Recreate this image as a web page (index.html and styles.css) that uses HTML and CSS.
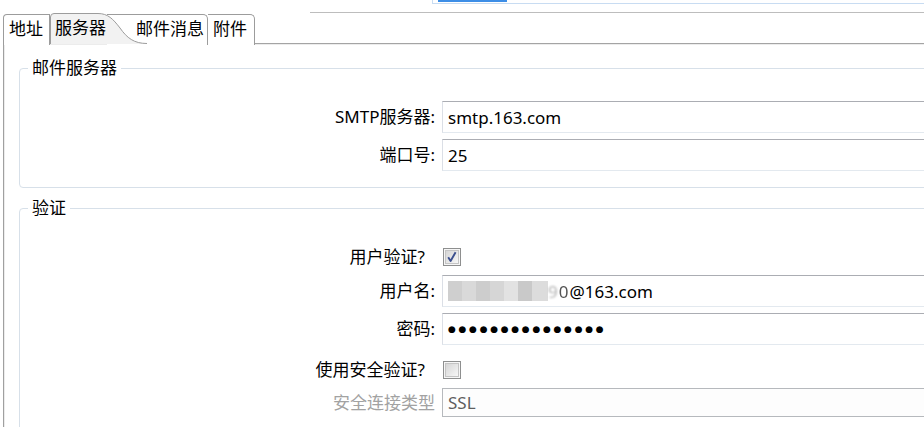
FILE: index.html
```html
<!DOCTYPE html>
<html lang="zh-CN">
<head>
<meta charset="utf-8">
<title>邮件设置</title>
<link rel="stylesheet" href="styles.css">
</head>
<body>
<div class="top">
  <div class="top-left"></div>
  <div class="top-right">
    <div class="top-box"><div class="top-bar"></div></div>
  </div>
</div>
<div class="tabs">
  <div class="tab tab-addr">地址</div>
  <div class="tab-sel">
    <svg class="tab-shape" width="97" height="31" viewBox="0 0 97 31">
      <path d="M0.5 31 V4 Q0.5 0.5 4 0.5 H48 C58 0.5 63 6 70 15 C77 25 84 30.5 97 30.5 V31 Z" fill="#f2f2f2"/>
      <path d="M0.5 31 V4 Q0.5 0.5 4 0.5 H48 C58 0.5 63 6 70 15 C77 25 84 30.5 97 30.5" fill="none" stroke="#9c9c9c"/>
    </svg>
    <span class="tab-label">服务器</span>
  </div>
  <div class="tab tab-msg">邮件消息</div>
  <div class="tab tab-att">附件</div>
</div>
<div class="panel">
  <fieldset class="group">
    <legend>邮件服务器</legend>
    <div class="rows rows-server">
      <div class="row row-field">
        <div class="lbl">SMTP服务器:</div>
        <div class="field">smtp.163.com</div>
      </div>
      <div class="row row-field gap6">
        <div class="lbl">端口号:</div>
        <div class="field">25</div>
      </div>
    </div>
  </fieldset>
  <fieldset class="group group-auth">
    <legend>验证</legend>
    <div class="rows rows-auth">
      <div class="row row-check">
        <div class="lbl lbl-check">用户验证?</div>
        <svg class="cb" width="18" height="18" viewBox="0 0 18 18">
          <defs><linearGradient id="g1" x1="0" y1="0" x2="1" y2="1"><stop offset="0" stop-color="#d4d4d4"/><stop offset="1" stop-color="#f8f8f8"/></linearGradient></defs>
          <rect x="0.5" y="0.5" width="17" height="17" fill="#f6f6f6" stroke="#8e8f8f"/>
          <rect x="2.5" y="2.5" width="13" height="13" fill="url(#g1)" stroke="#c4c4c4"/>
          <path d="M5.2 9.2 L7.6 13 L12.6 4.2" fill="none" stroke="#3b4f8e" stroke-width="1.9" stroke-linejoin="round"/>
        </svg>
      </div>
      <div class="row row-field gap9">
        <div class="lbl">用户名:</div>
        <div class="field user">
          <span class="blur"><i class="b1"></i><i class="b2"></i><i class="b3"></i><i class="b4"></i><i class="b5"></i><i class="b6"></i><i class="b7"></i></span><span class="faint">9</span><span class="half">0</span>@163.com
        </div>
      </div>
      <div class="row row-field gap6">
        <div class="lbl">密码:</div>
        <div class="field pw"><span class="dots">●●●●●●●●●●●●●●●</span></div>
      </div>
      <div class="row row-check gap16">
        <div class="lbl lbl-check">使用安全验证?</div>
        <svg class="cb" width="18" height="18" viewBox="0 0 18 18">
          <defs><linearGradient id="g2" x1="0" y1="0" x2="1" y2="1"><stop offset="0" stop-color="#d4d4d4"/><stop offset="1" stop-color="#f8f8f8"/></linearGradient></defs>
          <rect x="0.5" y="0.5" width="17" height="17" fill="#f6f6f6" stroke="#8e8f8f"/>
          <rect x="2.5" y="2.5" width="13" height="13" fill="url(#g2)" stroke="#c4c4c4"/>
        </svg>
      </div>
      <div class="row row-disabled gap9">
        <div class="lbl lbl-disabled">安全连接类型</div>
        <div class="field field-disabled">SSL</div>
      </div>
    </div>
  </fieldset>
</div>
</body>
</html>
```
FILE: styles.css
```css
html, body {
  margin: 0;
  padding: 0;
}
body {
  width: 924px;
  height: 427px;
  overflow: hidden;
  background: #ffffff;
  font-family: "Noto Sans", "Noto Sans CJK SC", sans-serif;
  font-size: 17px;
  color: #000000;
}

/* top strip */
.top {
  display: flex;
  height: 13px;
}
.top-left {
  width: 310px;
}
.top-right {
  flex: 1;
  height: 12px;
  border-bottom: 1px solid #bdbdbd;
}
.top-box {
  margin-left: 122px;
  height: 4px;
  border: 1px solid #c8dcf2;
  border-top: none;
  border-right: none;
  box-sizing: border-box;
  padding-left: 5px;
}
.top-bar {
  width: 69px;
  height: 2px;
  background: #3d8ee6;
}

/* tabs */
.tabs {
  display: flex;
  align-items: flex-start;
  height: 31px;
  margin-left: 3px;
  margin-bottom: -1px;
}
.tab {
  box-sizing: border-box;
  height: 31px;
  margin-top: 1px;
  border: 1px solid #9c9c9c;
  border-bottom: none;
  background: #ffffff;
  line-height: 27px;
  white-space: nowrap;
}
.tab-addr {
  width: 47px;
  padding-left: 5px;
  border-radius: 4px 0 0 0;
}
.tab-sel {
  position: relative;
  z-index: 2;
  width: 97px;
  height: 31px;
  flex: none;
}
.tab-shape {
  position: absolute;
  left: 0;
  top: 0;
}
.tab-label {
  position: relative;
  display: block;
  padding-left: 5px;
  line-height: 29px;
}
.tab-msg {
  width: 101px;
  margin-left: -40px;
  padding-left: 29px;
  border-left: none;
  border-radius: 0 5px 0 0;
}
.tab-att {
  width: 47px;
  padding-left: 5px;
  border-left: none;
  border-radius: 0 5px 0 0;
}

/* panel */
.panel {
  margin-left: 3px;
  height: 400px;
  border-left: 1px solid #a0a0a0;
  border-top: 1px solid #a4a4a4;
  box-shadow: inset 1px 1px 0 #ececec;
  padding-left: 15px;
  overflow: hidden;
}
.group {
  width: 1000px;
  margin: 14px 0 0 0;
  padding: 0 0 16px 0;
  border: 1px solid #d7e0e9;
  border-radius: 4px;
  box-sizing: border-box;
}
.group legend {
  margin-left: 8px;
  padding: 0 4px;
  line-height: 20px;
  height: 20px;
}
.group-auth {
  margin-top: 10px;
  padding-bottom: 30px;
}
.rows-server {
  padding-top: 23px;
}
.rows-auth {
  padding-top: 30px;
}
.row {
  display: flex;
  align-items: center;
}
.row-field {
  height: 32px;
}
.row-check {
  height: 18px;
}
.row-disabled {
  height: 29px;
}
.gap6 { margin-top: 6px; }
.gap9 { margin-top: 9px; }
.gap16 { margin-top: 16px; }

.lbl {
  width: 415px;
  flex: none;
  box-sizing: border-box;
  text-align: right;
  white-space: nowrap;
  line-height: 20px;
}
.lbl-check {
  padding-right: 10px;
}
.lbl-disabled {
  color: #a2a2a2;
}
.field {
  margin-left: 7px;
  width: 560px;
  height: 100%;
  box-sizing: border-box;
  border: 1px solid #dbdfe6;
  border-top-color: #abadb3;
  border-bottom-color: #e3e9ef;
  padding-left: 5px;
  display: flex;
  align-items: center;
  white-space: nowrap;
  background: #ffffff;
}
.field-disabled {
  border-color: #b6b9bd;
  color: #5e5e5e;
  background: #fdfdfd;
}
.cb {
  margin-left: 8px;
  display: block;
}

/* username blur */
.user .blur {
  display: inline-flex;
  height: 20px;
  filter: blur(0.6px);
}
.user .blur i {
  display: block;
  height: 20px;
}
.b1 { width: 14px; background: #cfcfcf; }
.b2 { width: 14px; background: #d9d9d9; }
.b3 { width: 14px; background: #cdcdcd; }
.b4 { width: 14px; background: #d6d6d6; }
.b5 { width: 14px; background: #e2e2e2; }
.b6 { width: 14px; background: #c9c9c9; }
.b7 { width: 16px; background: #dcdcdc; }
.faint {
  color: #b4b4b4;
  filter: blur(0.8px);
  margin-right: 1px;
}
.half {
  color: #555555;
  filter: blur(0.4px);
  margin-right: 1px;
}
.dots {
  font-family: "DejaVu Sans", sans-serif;
  font-size: 9px;
  letter-spacing: 2.7px;
  line-height: 20px;
}
```
